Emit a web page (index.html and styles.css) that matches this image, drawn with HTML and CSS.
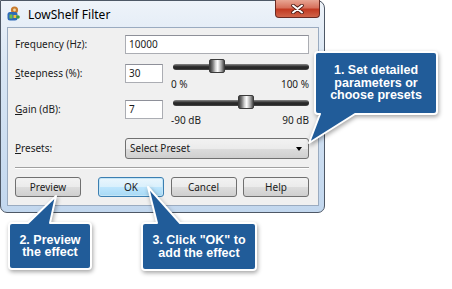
FILE: index.html
```html
<!DOCTYPE html>
<html>

<head>
  <link rel="stylesheet" href="styles.css">
</head>

<body>
  <div class="stage">
    <div class="window">
      <div class="titlebar">
        <svg class="app-icon" width="13" height="15" viewBox="0 0 13 15">
          <circle cx="7.5" cy="4" r="3.6" fill="#c77a2c" />
          <circle cx="7.5" cy="4" r="1.4" fill="#f3d9a6" />
          <rect x="0.5" y="6" width="10" height="8.5" rx="2.5" fill="#2d6bb8" />
          <path d="M2.5 8.5h3v4h-3z" fill="#6cc04a" />
          <path d="M6.5 9h3v3h-3z" fill="#f0c040" />
          <circle cx="11" cy="11" r="1.8" fill="#3c9a3c" />
        </svg>
        <span class="title">LowShelf Filter</span>
        <div class="close-btn">
          <svg width="13" height="10" viewBox="0 0 13 10">
            <path d="M2 1.5 L11 8.5 M11 1.5 L2 8.5" stroke="#4a1a14" stroke-width="3.6" stroke-linecap="round" />
            <path d="M2 1.5 L11 8.5 M11 1.5 L2 8.5" stroke="#ffffff" stroke-width="2" stroke-linecap="round" />
          </svg>
        </div>
      </div>

      <div class="client">
        <div class="row">
          <label class="label">Frequency (Hz):</label>
          <div class="field field-wide">10000</div>
        </div>

        <div class="row slider-row">
          <label class="label"><u>S</u>teepness (%):</label>
          <div class="field field-narrow">30</div>
          <div class="slider">
            <div class="track-area">
              <div class="track"></div>
              <div class="travel">
                <div class="thumb" style="left: 30%"></div>
              </div>
            </div>
            <div class="ticks"><span>0 %</span><span>100 %</span></div>
          </div>
        </div>

        <div class="row slider-row">
          <label class="label"><u>G</u>ain (dB):</label>
          <div class="field field-narrow">7</div>
          <div class="slider">
            <div class="track-area">
              <div class="track"></div>
              <div class="travel">
                <div class="thumb" style="left: 53.9%"></div>
              </div>
            </div>
            <div class="ticks"><span>-90 dB</span><span>90 dB</span></div>
          </div>
        </div>

        <div class="row presets-row">
          <label class="label"><u>P</u>resets:</label>
          <div class="select">
            <span>Select Preset</span>
            <span class="arrow"></span>
          </div>
        </div>

        <div class="separator"></div>

        <div class="buttons">
          <button class="btn">Preview</button>
          <div class="button-group">
            <button class="btn btn-default">OK</button>
            <button class="btn">Cancel</button>
            <button class="btn">Help</button>
          </div>
        </div>
      </div>
    </div>

    <!-- callouts lie over the dialog -->
    <div class="callout callout-presets">
      <svg class="bubble" width="122" height="62">
        <path d="M3 0 H119 Q122 0 122 3 V59 Q122 62 119 62 H40 L-6 91 L5 62 H3 Q0 62 0 59 V3 Q0 0 3 0 Z" />
      </svg>
      <span class="callout-text">1. Set detailed<br>parameters or<br>choose presets</span>
    </div>

    <div class="callout callout-preview">
      <svg class="bubble" width="82" height="46">
        <path d="M3 0 H19 L47 -27 L41 0 H79 Q82 0 82 3 V43 Q82 46 79 46 H3 Q0 46 0 43 V3 Q0 0 3 0 Z" />
      </svg>
      <span class="callout-text">2. Preview<br>the effect</span>
    </div>

    <div class="callout callout-ok">
      <svg class="bubble" width="114" height="47">
        <path d="M3 0 H15 L6 -36 L38 0 H111 Q114 0 114 3 V44 Q114 47 111 47 H3 Q0 47 0 44 V3 Q0 0 3 0 Z" />
      </svg>
      <span class="callout-text">3. Click "OK" to<br>add the effect</span>
    </div>
  </div>
</body>

</html>
```

FILE: styles.css
```css
body {
  margin: 0;
  background: #ffffff;
  font-family: "Noto Sans", sans-serif;
  font-size: 10px;
  color: #1b1b1b;
}

.stage {
  position: relative;
  width: 452px;
  height: 289px;
  overflow: hidden;
}

/* dialog window */
.window {
  width: 325px;
  height: 213px;
  box-sizing: border-box;
  border: 1px solid #4e5866;
  border-radius: 0 8px 7px 7px;
  background: linear-gradient(#eef3f9, #d9e6f4 30%, #c2d7ee);
  padding: 0 5px 6px 6px;
  display: flex;
  flex-direction: column;
}

.titlebar {
  height: 26px;
  display: flex;
  align-items: center;
}

.app-icon {
  margin-top: -1px;
}

.title {
  margin-left: 8px;
  font-size: 12px;
  color: #000000;
}

.close-btn {
  align-self: flex-start;
  margin: -1px -1px 0 auto;
  width: 45px;
  height: 18px;
  box-sizing: border-box;
  border: 1px solid #6a2a22;
  border-top: none;
  border-radius: 0 0 4px 4px;
  background: linear-gradient(#e8a593, #d7715c 45%, #c23a22 55%, #d0644a);
  display: flex;
  align-items: center;
  justify-content: center;
}

.client {
  flex: 1;
  background: #f0f0f0;
  border: 1px solid #9aabc0;
  padding: 7px 9px 0 7px;
  display: flex;
  flex-direction: column;
}

.row {
  display: flex;
  align-items: flex-start;
}

.slider-row {
  margin-top: 6px;
}

.presets-row {
  margin-top: 12px;
}

.label {
  width: 110px;
  flex: none;
  line-height: 19px;
}

.slider-row .label,
.slider-row .field {
  margin-top: 4px;
}

.presets-row .label {
  line-height: 21px;
}

.field {
  height: 19px;
  box-sizing: border-box;
  border: 1px solid #abadb3;
  border-top-color: #8e9099;
  background: #ffffff;
  padding-left: 3px;
  line-height: 17px;
}

.field-wide {
  flex: 1;
}

.field-narrow {
  width: 38px;
}

/* trackbar */
.slider {
  width: 136px;
  margin-left: 10px;
}

.track-area {
  position: relative;
  height: 14px;
}

.track {
  position: absolute;
  top: 4px;
  left: 0;
  right: 0;
  height: 6px;
  border-radius: 3px;
  background: linear-gradient(#8a8a8a, #333333 40%, #222222 70%, #4a4a4a);
}

.travel {
  position: absolute;
  top: 0;
  bottom: 0;
  left: 0;
  right: 16px;
}

.thumb {
  position: absolute;
  top: -1px;
  width: 16px;
  height: 14px;
  box-sizing: border-box;
  border: 1px solid #3c3c3c;
  border-radius: 2px;
  background: linear-gradient(to right, #3a3a3a, #7c7c7c 20%, #d6d6d6 40%, #ffffff 55%, #a8a8a8 80%, #4a4a4a);
}

.ticks {
  display: flex;
  justify-content: space-between;
  margin: 4px 0 0 -2px;
  line-height: 12px;
}

/* combo box */
.select {
  flex: 1;
  height: 21px;
  box-sizing: border-box;
  border: 1px solid #707070;
  border-radius: 3px;
  background: linear-gradient(#f2f2f2, #ebebeb 50%, #dddddd 50%, #cfcfcf);
  padding: 0 6px 0 4px;
  display: flex;
  align-items: center;
  justify-content: space-between;
  line-height: 19px;
}

.arrow {
  width: 0;
  height: 0;
  border-left: 3.5px solid transparent;
  border-right: 3.5px solid transparent;
  border-top: 4px solid #000000;
}

.separator {
  margin-top: 8px;
  border-top: 1px solid #a0a0a0;
  border-bottom: 1px solid #ffffff;
}

.buttons {
  margin-top: 8px;
  display: flex;
  justify-content: space-between;
}

.button-group {
  display: flex;
  gap: 6.5px;
}

.btn {
  width: 66px;
  height: 20px;
  padding: 0;
  border: 1px solid #707070;
  border-radius: 3px;
  background: linear-gradient(#f2f2f2, #ebebeb 50%, #dddddd 50%, #cfcfcf);
  font-family: "Noto Sans", sans-serif;
  font-size: 10px;
  color: #1b1b1b;
}

.btn-default {
  border-color: #3c7fb1;
  background: linear-gradient(#eaf6fd, #d9f0fc 50%, #bee6fd 50%, #a7d9f5);
  box-shadow: inset 0 0 0 1px #c4e5f6;
}

/* annotation bubbles */
.callout {
  position: absolute;
  display: flex;
  align-items: center;
  justify-content: center;
  color: #ffffff;
  font-family: "Liberation Sans", Arial, sans-serif;
  font-weight: bold;
  font-size: 12.5px;
  line-height: 12.5px;
  text-align: center;
}

.bubble {
  position: absolute;
  left: 0;
  top: 0;
  overflow: visible;
  filter: drop-shadow(1px 2px 2px rgba(0, 0, 0, 0.35));
}

.bubble path {
  fill: #215c99;
  stroke: #ffffff;
  stroke-width: 2;
  stroke-linejoin: round;
}

.callout-text {
  position: relative;
}

.callout-presets {
  left: 315px;
  top: 52px;
  width: 122px;
  height: 62px;
}

.callout-preview {
  left: 9px;
  top: 223px;
  width: 82px;
  height: 46px;
}

.callout-ok {
  left: 142px;
  top: 223px;
  width: 114px;
  height: 47px;
}
```
